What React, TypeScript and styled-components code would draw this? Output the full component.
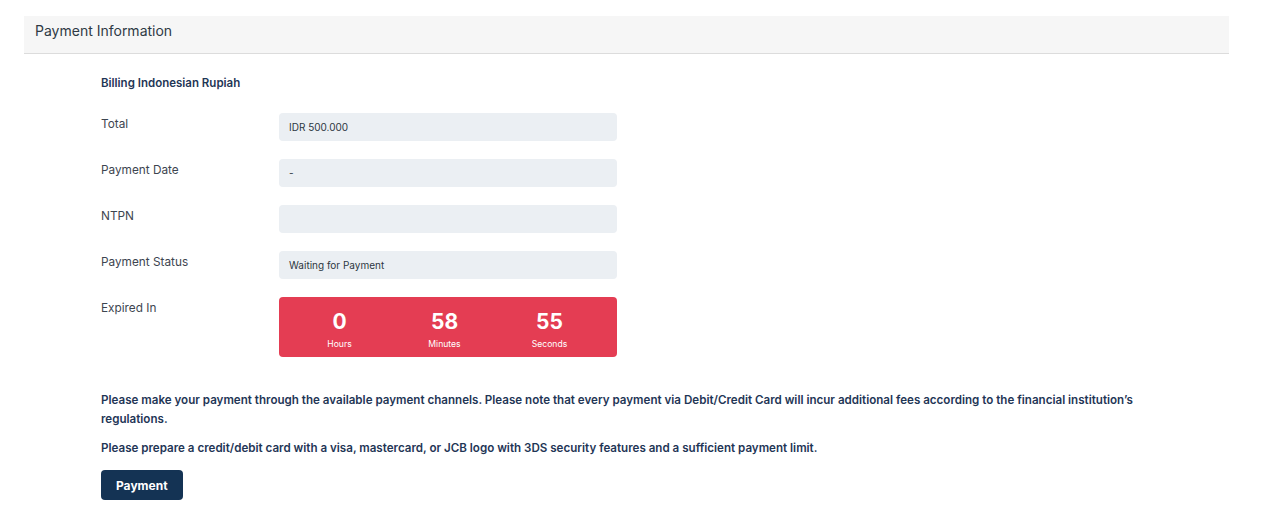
import React from "react";
import styled, { createGlobalStyle } from "styled-components";

const Global = createGlobalStyle`
  html, body { margin: 0; padding: 0; background: #fff; }
  body { font-family: Inter, "Noto Sans", sans-serif; }
  * { box-sizing: border-box; }
`;

const Page = styled.div`
  padding: 16px 51px 0 24px;
`;

const Header = styled.div`
  height: 38px;
  background: #f6f6f6;
  border-bottom: 1px solid #dcdcdc;
  padding: 6px 11px 0;
  font-size: 14px;
  line-height: 17px;
  color: #2f3a45;
`;

const Body = styled.div`
  padding: 20px 77px 0;
`;

const Subtitle = styled.div`
  font-size: 11.5px;
  font-weight: 600;
  color: #1f3656;
  height: 18px;
  line-height: 18px;
  margin-bottom: 21px;
`;

const Grid = styled.div`
  display: grid;
  grid-template-columns: 178px 338px;
  row-gap: 18px;
  align-items: start;
`;

const Label = styled.div`
  font-size: 11.8px;
  color: #3d4550;
  padding-top: 4px;
  line-height: 14px;
`;

const Field = styled.div`
  height: 28px;
  background: #ebeff3;
  border-radius: 4px;
  display: flex;
  align-items: center;
  padding: 0 10px;
  font-size: 10px;
  color: #2d3742;
`;

const Timer = styled.div`
  height: 60px;
  background: #e43d53;
  border-radius: 4px;
  display: grid;
  grid-template-columns: repeat(3, 105px);
  padding: 0 15px 0 8px;
`;

const Unit = styled.div`
  display: flex;
  flex-direction: column;
  align-items: center;
  color: #fff;
  padding-top: 12px;
`;

const Num = styled.div`
  font-size: 21px;
  font-weight: 700;
  line-height: 26px;
`;

const UnitLabel = styled.div`
  font-size: 8.6px;
  line-height: 12px;
  margin-top: 3px;
`;

const Notes = styled.div`
  margin-top: 34px;
  max-width: 1040px;
`;

const Note = styled.p`
  margin: 0 0 10px;
  font-size: 11.6px;
  font-weight: 600;
  line-height: 19px;
  color: #1f3656;
`;

const Button = styled.button`
  margin-top: 2px;
  height: 30px;
  padding: 0 15px;
  border: none;
  border-radius: 4px;
  background: #143354;
  color: #fff;
  font-family: inherit;
  font-size: 12px;
  font-weight: 700;
`;

const rows: [string, string][] = [
  ["Total", "IDR 500.000"],
  ["Payment Date", "-"],
  ["NTPN", ""],
  ["Payment Status", "Waiting for Payment"],
];

export default function App() {
  return (
    <>
      <Global />
      <Page>
        <Header>Payment Information</Header>
        <Body>
          <Subtitle>Billing Indonesian Rupiah</Subtitle>
          <Grid>
            {rows.map(([l, v]) => (
              <React.Fragment key={l}>
                <Label>{l}</Label>
                <Field>{v}</Field>
              </React.Fragment>
            ))}
            <Label>Expired In</Label>
            <Timer>
              <Unit>
                <Num>0</Num>
                <UnitLabel>Hours</UnitLabel>
              </Unit>
              <Unit>
                <Num>58</Num>
                <UnitLabel>Minutes</UnitLabel>
              </Unit>
              <Unit>
                <Num>55</Num>
                <UnitLabel>Seconds</UnitLabel>
              </Unit>
            </Timer>
          </Grid>
          <Notes>
            <Note>
              Please make your payment through the available payment channels. Please note that every payment via Debit/Credit Card will incur additional fees according to the financial institution’s regulations.
            </Note>
            <Note>
              Please prepare a credit/debit card with a visa, mastercard, or JCB logo with 3DS security features and a sufficient payment limit.
            </Note>
          </Notes>
          <Button>Payment</Button>
        </Body>
      </Page>
    </>
  );
}
